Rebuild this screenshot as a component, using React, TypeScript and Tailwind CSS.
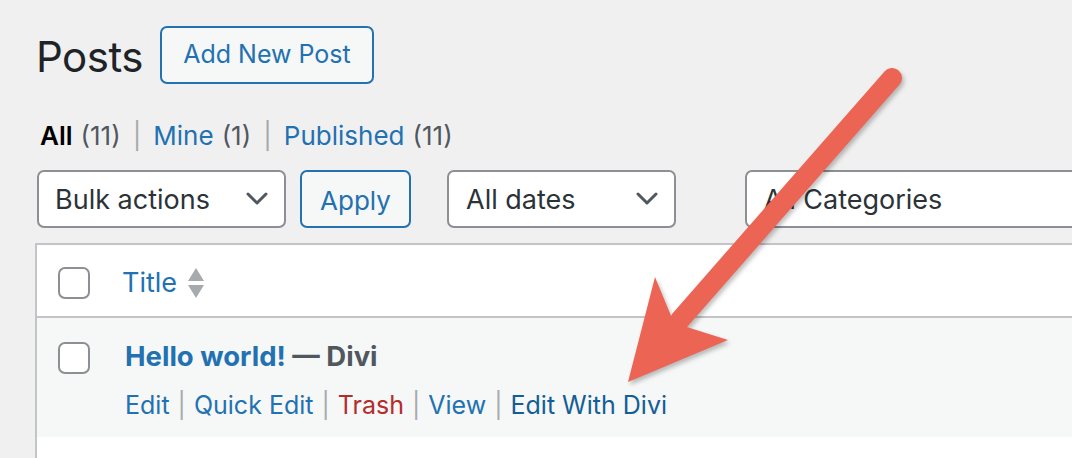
import React from "react";

const font = { fontFamily: "Inter, 'Noto Sans', 'Liberation Sans', sans-serif" };

function Chevron() {
  return (
    <svg width="22" height="14" viewBox="0 0 22 14" className="shrink-0">
      <path d="M2 2 L11 11 L20 2" fill="none" stroke="#50575e" strokeWidth="3" strokeLinecap="round" strokeLinejoin="round" />
    </svg>
  );
}

function Checkbox() {
  return <div className="w-[32px] h-[32px] rounded-[7px] border-2 border-[#8c8f94] bg-white shrink-0" />;
}

export default function App() {
  return (
    <div className="relative w-[1072px] h-[458px] overflow-hidden bg-[#f0f0f1] text-[#2c3338]" style={font}>
      <div className="pl-[35px] pt-[26px]">
        {/* Heading */}
        <div className="flex items-center h-[58px]">
          <h1 className="text-[42px] leading-none text-[#1d2327] font-normal tracking-[-0.5px] mr-[17px] mt-[3px] ml-[1px]">Posts</h1>
          <button className="shrink-0 h-[58px] w-[214px] rounded-[7px] border-2 border-[#2271b1] bg-[#f6f7f7] text-[#2271b1] text-[25px] flex items-center justify-center">
            Add New Post
          </button>
        </div>

        {/* subsubsub */}
        <div className="mt-[34px] ml-[5px] h-[34px] flex items-center text-[26px] text-[#50575e]">
          <span className="font-semibold text-black">All</span>
          <span className="ml-[8px]">(11)</span>
          <span className="mx-[12px] text-[#a7aaad]">|</span>
          <span className="text-[#2271b1]">Mine</span>
          <span className="ml-[8px]">(1)</span>
          <span className="mx-[12px] text-[#a7aaad]">|</span>
          <span className="text-[#2271b1]">Published</span>
          <span className="ml-[8px]">(11)</span>
        </div>

        {/* Filters */}
        <div className="mt-[18px] flex items-center h-[58px]">
          <div className="shrink-0 ml-[2px] h-[58px] w-[249px] rounded-[7px] border-2 border-[#8c8f94] bg-white flex items-center justify-between pl-[16px] pr-[16px] text-[27px]">
            <span className="pt-[3px]">Bulk actions</span>
            <Chevron />
          </div>
          <button className="shrink-0 ml-[14px] h-[58px] w-[111px] rounded-[7px] border-2 border-[#2271b1] bg-[#f6f7f7] text-[#2271b1] text-[26px] flex items-center justify-center pt-[2px]">
            Apply
          </button>
          <div className="shrink-0 ml-[36px] h-[58px] w-[229px] rounded-[7px] border-2 border-[#8c8f94] bg-white flex items-center justify-between pl-[17px] pr-[16px] text-[27px]">
            <span className="pt-[3px]">All dates</span>
            <Chevron />
          </div>
          <div className="shrink-0 ml-[69px] h-[58px] w-[400px] rounded-[7px] border-2 border-[#8c8f94] bg-white flex items-center pl-[17px] text-[27px]">
            <span className="pt-[3px]">All Categories</span>
          </div>
        </div>

        {/* Table */}
        <div className="mt-[15px] border-t-2 border-l-2 border-[#c3c4c7] bg-white">
          <div className="h-[73px] flex items-center border-b-2 border-[#c3c4c7] pt-[5px]">
            <div className="ml-[21px]"><Checkbox /></div>
            <span className="ml-[32px] text-[27px] text-[#2271b1]">Title</span>
            <svg width="18" height="32" viewBox="0 0 18 32" className="ml-[10px]">
              <path d="M9 1 L17 14 L1 14 Z" fill="#a7aaad" />
              <path d="M1 18 L17 18 L9 31 Z" fill="#a7aaad" />
            </svg>
          </div>
          <div className="h-[119px] bg-[#f6f7f7] flex">
            <div className="ml-[21px] mt-[24px]"><Checkbox /></div>
            <div className="ml-[35px] mt-[21px]">
              <div className="text-[27.5px] font-bold leading-[34px]">
                <span className="text-[#2271b1]">Hello world!</span>
                <span className="text-[#50575e]"> — Divi</span>
              </div>
              <div className="mt-[16px] text-[25px] leading-[32px] flex items-center">
                <span className="text-[#2271b1]">Edit</span>
                <span className="mx-[8px] text-[#a7aaad]">|</span>
                <span className="text-[#2271b1]">Quick Edit</span>
                <span className="mx-[8px] text-[#a7aaad]">|</span>
                <span className="text-[#b32d2e]">Trash</span>
                <span className="mx-[8px] text-[#a7aaad]">|</span>
                <span className="text-[#2271b1]">View</span>
                <span className="mx-[8px] text-[#a7aaad]">|</span>
                <span className="text-[#135e96]">Edit With Divi</span>
              </div>
            </div>
          </div>
          <div className="h-[40px] bg-white" />
        </div>
      </div>

      {/* Arrow overlay */}
      <svg
        className="absolute left-0 top-0 pointer-events-none"
        width="1072"
        height="458"
        viewBox="0 0 1072 458"
        style={{ filter: "drop-shadow(2px 3px 2px rgba(0,0,0,0.25))" }}
      >
        <line x1="892" y1="78" x2="680" y2="320" stroke="#ec6453" strokeWidth="20" strokeLinecap="round" />
        <polygon points="628,382 655,277 674,323 728,340" fill="#ec6453" />
      </svg>
    </div>
  );
}
